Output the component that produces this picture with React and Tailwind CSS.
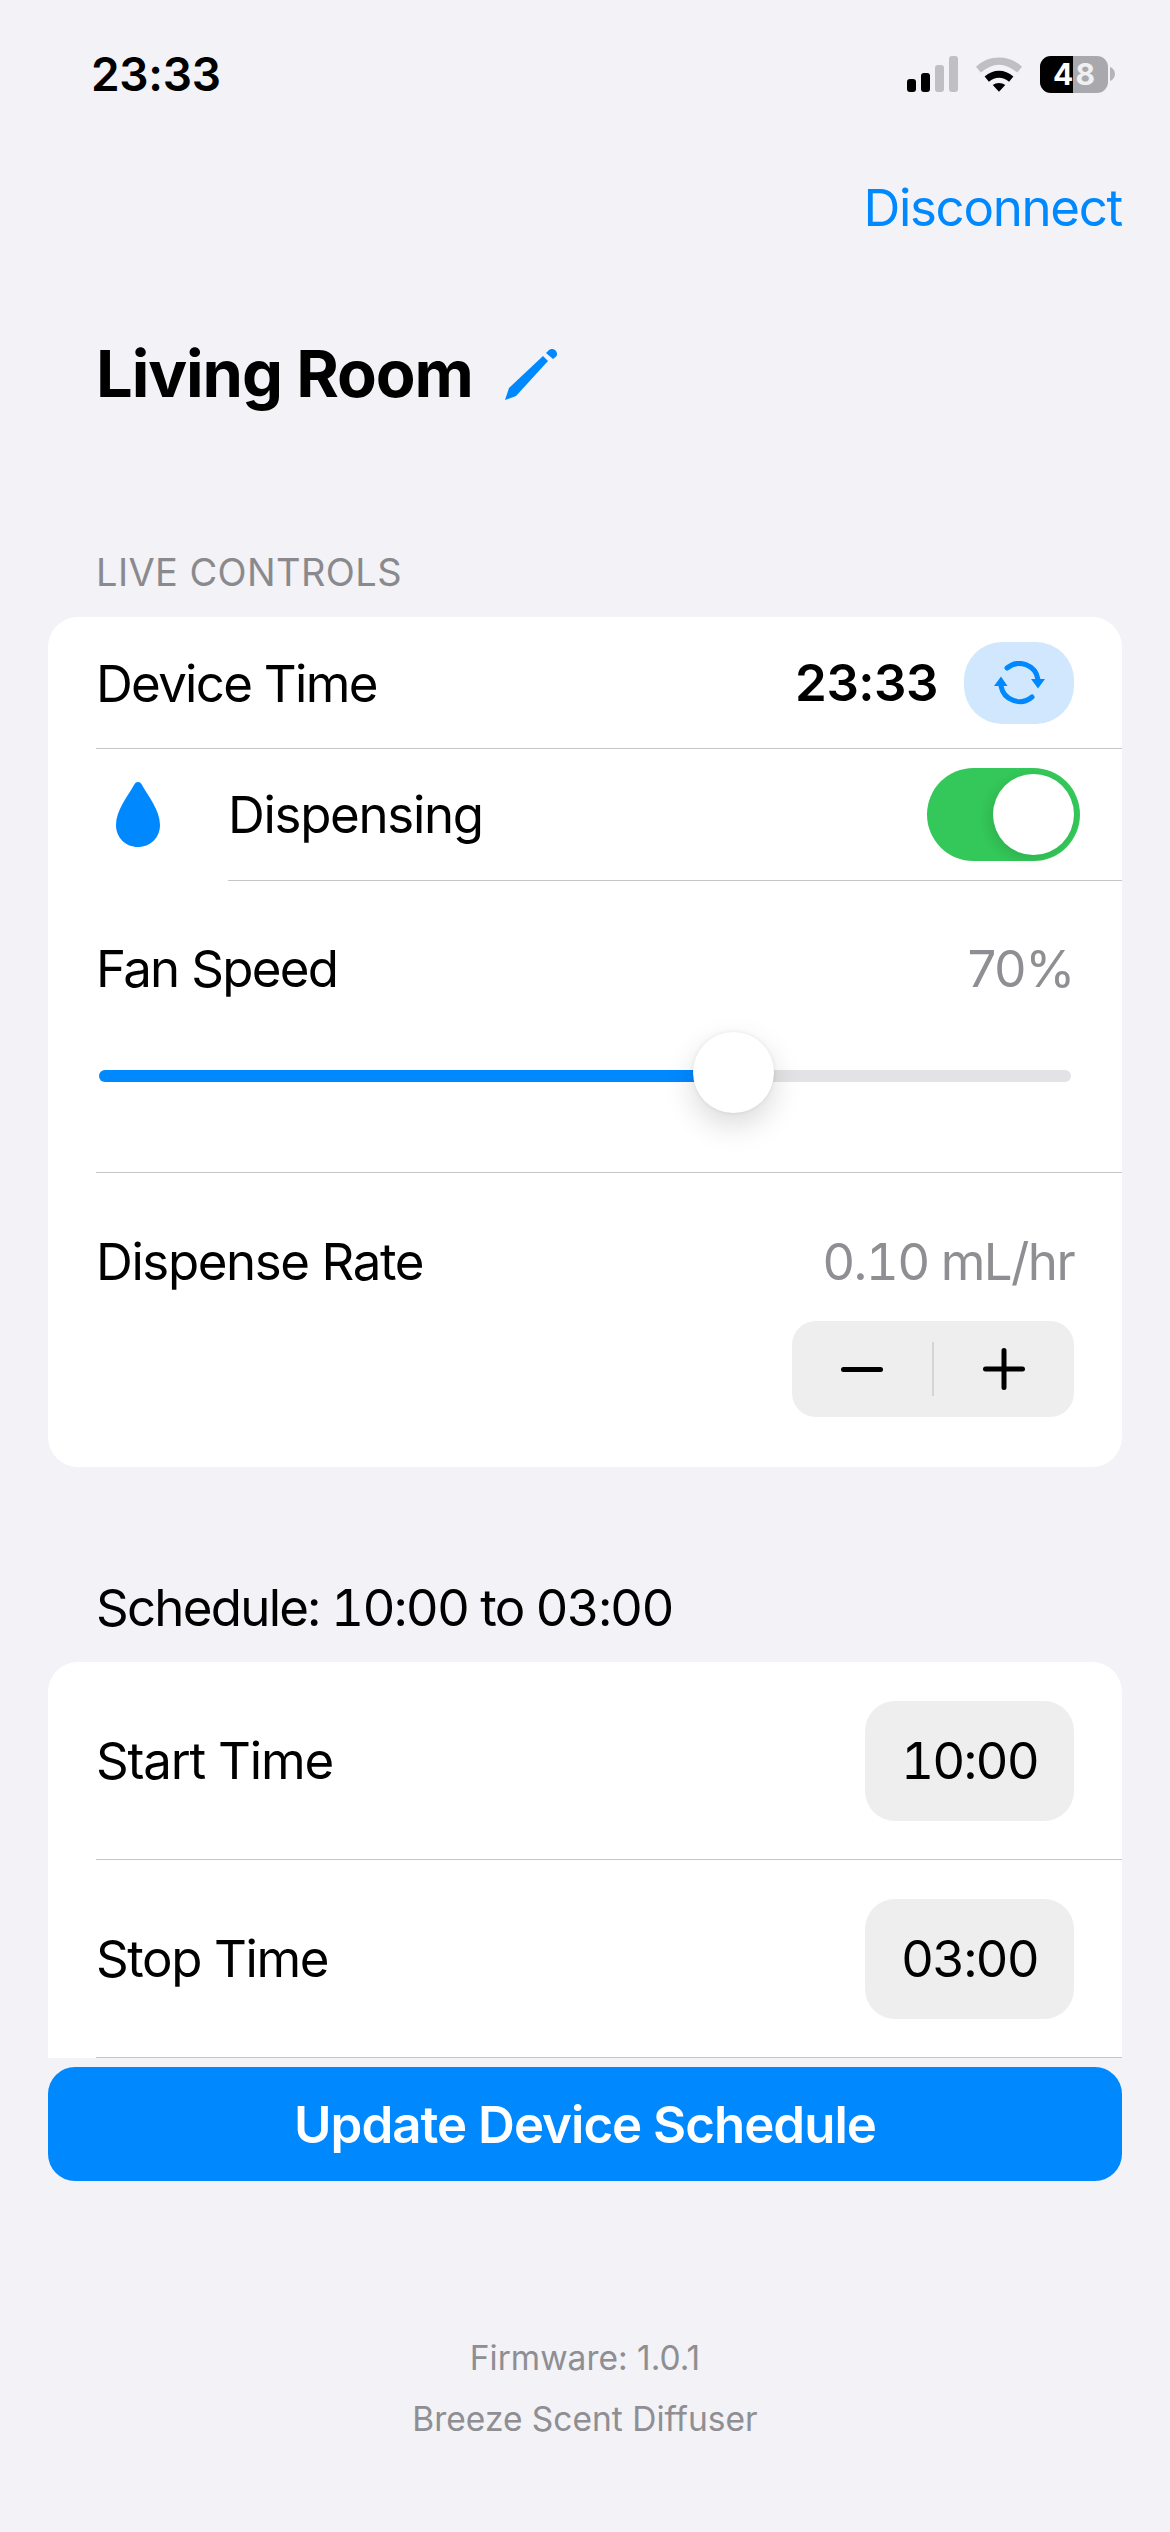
const BLUE = '#0088ff';

function SignalIcon() {
  return (
    <svg width="51" height="38" viewBox="0 0 51 38">
      <rect x="0" y="24" width="9" height="13" rx="3" fill="#000" />
      <rect x="14" y="18" width="9" height="19" rx="3" fill="#000" />
      <rect x="28" y="10" width="9" height="27" rx="3" fill="#c0c0c4" />
      <rect x="42" y="1" width="9" height="36" rx="3" fill="#c0c0c4" />
    </svg>
  );
}

function WifiIcon() {
  return (
    <svg width="48" height="37" viewBox="0 0 50 38">
      <path d="M1 11 C14 -2 36 -2 49 11 L44 17 C31 6 19 6 6 17 Z" fill="#c0c0c4" />
      <path d="M10 21 C19 13 31 13 40 21 L35.5 26.5 C29 21 21 21 14.5 26.5 Z" fill="#000" />
      <path d="M18.5 30 C22 27 28 27 31.5 30 L25 37 Z" fill="#000" />
    </svg>
  );
}

function BatteryIcon() {
  return (
    <div className="flex items-center">
      <div className="relative w-[68px] h-[37px] rounded-[11px] overflow-hidden bg-[#a9a9ad]">
        <div className="absolute left-0 top-0 bottom-0 w-[33px] bg-black" />
        <div className="absolute inset-0 flex items-center justify-center text-[30px] font-bold text-white leading-none gap-[2px]">
          <span>4</span><span className="text-[#f0f0f2]">8</span>
        </div>
      </div>
      <svg width="5" height="14" viewBox="0 0 5 14" className="ml-[2px]">
        <path d="M0 0 C3 1 5 4 5 7 C5 10 3 13 0 14 Z" fill="#b5b5b9" />
      </svg>
    </div>
  );
}

function Sep({ inset = 'ml-[48px]' }) {
  return <div className={`${inset} h-px bg-[#c6c6c8]`} />;
}

export default function App() {
  return (
    <div className="w-[1170px] h-[2532px] overflow-hidden bg-[#f2f2f7] text-black font-['Inter','Liberation_Sans',sans-serif]">
      {/* status bar */}
      <div className="h-[148px] pt-[48px] pl-[91px] pr-[55px] flex justify-between items-start">
        <span className="text-[46px] leading-[52px] font-semibold tracking-[-0.3px]">23:33</span>
        <div className="flex items-center gap-[17px] pt-[7px]">
          <SignalIcon />
          <WifiIcon />
          <BatteryIcon />
        </div>
      </div>

      {/* nav */}
      <div className="h-[160px] flex justify-end pr-[48px]">
        <span className="text-[51px] leading-[120px] h-[120px] text-[#0088ff] tracking-[-1.3px]">Disconnect</span>
      </div>

      {/* title */}
      <div className="h-[134px] pl-[96px] flex items-center gap-[32px]">
        <h1 className="text-[65px] font-bold leading-none tracking-[-1.1px] mb-[4px]">Living Room</h1>
        <svg width="52" height="52" viewBox="0 0 52 52" fill={BLUE} className="mb-[2px]">
          <path d="M4 40 L38 8 L43 13 L11 48 L0 52 Z" />
          <path d="M41 5 L43.5 2.5 C45.5 0.5 48.5 0.5 50.5 2.5 C52.5 4.5 52.5 7.5 50.5 9 L48 11 Z" />
        </svg>
      </div>

      <div className="h-[175px] pl-[96px] pt-[108px] text-[38px] leading-[44px] text-[#8a8a8e] tracking-[0.4px]">LIVE CONTROLS</div>

      {/* live controls card */}
      <div className="mx-[48px] h-[850px] bg-white rounded-[30px] overflow-hidden">
        <div className="h-[131px] pl-[48px] pr-[48px] flex items-center justify-between">
          <span className="text-[51px] tracking-[-1.7px] pt-[4px]">Device Time</span>
          <div className="flex items-center gap-[26px]">
            <span className="text-[51px] font-semibold tracking-[-0.5px] pt-[2px]">23:33</span>
            <div className="w-[110px] h-[82px] rounded-[38px] bg-[#d1e7fd] flex items-center justify-center">
              <svg width="51" height="44" viewBox="0 0 51 44" fill="none">
                <path d="M13 7 A19 19 0 0 1 44 18.5" stroke={BLUE} strokeWidth="5" strokeLinecap="round" />
                <path d="M38 36 A19 19 0 0 1 7 25" stroke={BLUE} strokeWidth="5" strokeLinecap="round" />
                <path d="M37 18 L51 18 L44 27.5 Z" fill={BLUE} />
                <path d="M0 25 L13.5 25 L7 15.5 Z" fill={BLUE} />
              </svg>
            </div>
          </div>
        </div>
        <Sep />

        <div className="h-[131px] flex items-center">
          <div className="w-[180px] flex justify-center">
            <svg width="44" height="65" viewBox="0 0 44 65">
              <path d="M22 0 C24 0 25 1 26 3 C32 14 44 28 44 43 C44 56 34 65 22 65 C10 65 0 56 0 43 C0 28 12 14 18 3 C19 1 20 0 22 0 Z" fill={BLUE} />
            </svg>
          </div>
          <span className="text-[51px] tracking-[-1.3px] pt-[2px]">Dispensing</span>
          <div className="ml-auto mr-[42px] w-[153px] h-[93px] rounded-full bg-[#34c759] relative">
            <div className="absolute right-[6px] top-[6px] w-[81px] h-[81px] rounded-full bg-white shadow-[-4px_4px_12px_rgba(0,0,0,0.1)]" />
          </div>
        </div>
        <Sep inset="ml-[180px]" />

        <div className="h-[291px] pl-[48px] pr-[48px] pt-[57px]">
          <div className="flex justify-between items-center h-[62px]">
            <span className="text-[51px] tracking-[-1.7px]">Fan Speed</span>
            <span className="text-[51px] tracking-[-1.3px] text-[#8e8e93]">70%</span>
          </div>
          <div className="relative mt-[70px] mx-[3px] h-[12px] rounded-full bg-[#e3e3e5]">
            <div className="h-full w-[62%] rounded-full bg-[#0088ff]" />
            <div className="absolute left-[594px] top-[-38px] w-[81px] h-[81px] rounded-full bg-white shadow-[0_12px_30px_rgba(0,0,0,0.15),0_0_4px_rgba(0,0,0,0.08)]" />
          </div>
        </div>
        <Sep />

        <div className="pl-[48px] pr-[48px] pt-[58px]">
          <div className="flex justify-between items-center h-[62px]">
            <span className="text-[51px] tracking-[-1.4px]">Dispense Rate</span>
            <span className="text-[51px] tabular-nums tracking-[-1.6px] text-[#8e8e93]">0.10 mL/hr</span>
          </div>
          <div className="flex justify-end mt-[28px]">
            <div className="w-[282px] h-[96px] rounded-[24px] bg-[#eeeeef] flex items-center">
              <div className="flex-1 flex justify-center">
                <div className="w-[42px] h-[5px] rounded-full bg-black" />
              </div>
              <div className="w-[2px] h-[54px] bg-[#d4d4d6]" />
              <div className="flex-1 flex justify-center">
                <svg width="42" height="42" viewBox="0 0 42 42" fill="none" stroke="#000" strokeWidth="5" strokeLinecap="round">
                  <path d="M2.5 21 H39.5 M21 2.5 V39.5" />
                </svg>
              </div>
            </div>
          </div>
        </div>
      </div>

      <div className="h-[195px] pl-[96px] pt-[111px] text-[51px] leading-[60px] tabular-nums tracking-[-1.75px]">Schedule: 10:00 to 03:00</div>

      {/* schedule card, cut off by the button */}
      <div className="mx-[48px] h-[396px] bg-white rounded-t-[30px] overflow-hidden">
        <div className="h-[197px] pl-[48px] pr-[48px] flex items-center justify-between">
          <span className="text-[51px] tracking-[-1.2px] pt-[2px]">Start Time</span>
          <div className="w-[209px] h-[120px] rounded-[30px] bg-[#eeeeef] flex items-center justify-center text-[51px] tabular-nums tracking-[-1.8px] pt-[2px]">10:00</div>
        </div>
        <Sep />
        <div className="h-[197px] pl-[48px] pr-[48px] flex items-center justify-between">
          <span className="text-[51px] tracking-[-1.4px] pt-[2px]">Stop Time</span>
          <div className="w-[209px] h-[120px] rounded-[30px] bg-[#eeeeef] flex items-center justify-center text-[51px] tabular-nums tracking-[-1.8px] pt-[2px]">03:00</div>
        </div>
        <Sep />
      </div>

      <div className="mt-[9px] mx-[48px] h-[114px] rounded-[27px] bg-[#0088ff] flex items-center justify-center text-white text-[51px] font-semibold tracking-[-1px] pt-[2px]">
        Update Device Schedule
      </div>

      <div className="mt-[150px] flex flex-col items-center text-[33.5px] leading-[54px] gap-[7px] text-[#8e8e93]">
        <span>Firmware: 1.0.1</span>
        <span>Breeze Scent Diffuser</span>
      </div>
    </div>
  );
}
